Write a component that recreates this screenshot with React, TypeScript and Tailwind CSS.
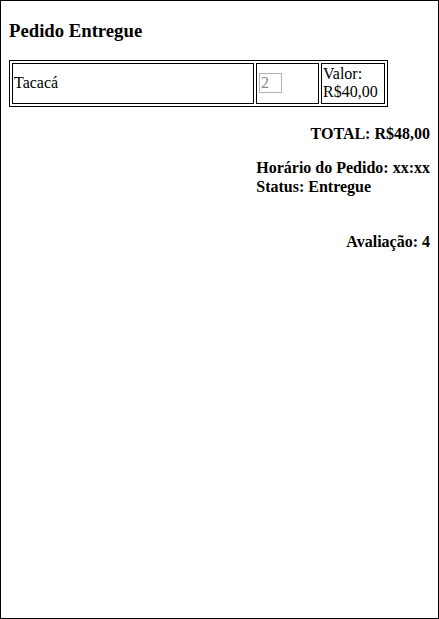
import React from "react";

const serif = { fontFamily: '"Liberation Serif", "Times New Roman", serif' };

export default function App() {
  const pedido = { item: "Tacacá", qtd: 2, valor: "R$40,00", total: "R$48,00" };

  return (
    <div
      style={serif}
      className="min-h-[619px] w-[439px] border border-black px-2 text-[16px] leading-[18.4px] text-black bg-white"
    >
      <h3 className="mt-[18.7px] mb-[18.7px] text-[18.72px] leading-[21.5px] font-bold">
        Pedido Entregue
      </h3>

      <table className="w-[379px] border-separate border-spacing-[2px] border border-black">
        <tbody>
          <tr>
            <td className="w-[242px] border border-black p-px align-middle">
              {pedido.item}
            </td>
            <td className="w-[63px] border border-black p-px align-middle">
              <input
                disabled
                value={pedido.qtd}
                className="ml-px w-[23px] h-[20px] border border-[#b4b4b4] bg-white px-px text-[#8a8a8a] text-[16px]"
                style={serif}
              />
            </td>
            <td className="w-[64px] border border-black p-px align-middle">
              Valor:
              <br />
              {pedido.valor}
            </td>
          </tr>
        </tbody>
      </table>

      <p className="mt-[18px] text-right font-bold">TOTAL: {pedido.total}</p>

      <div className="mt-[16px] flex justify-end">
        <div className="text-left font-bold">
          <p>Horário do Pedido: xx:xx</p>
          <p>Status: Entregue</p>
        </div>
      </div>

      <p className="mt-[37px] text-right font-bold">Avaliação: 4</p>
    </div>
  );
}
